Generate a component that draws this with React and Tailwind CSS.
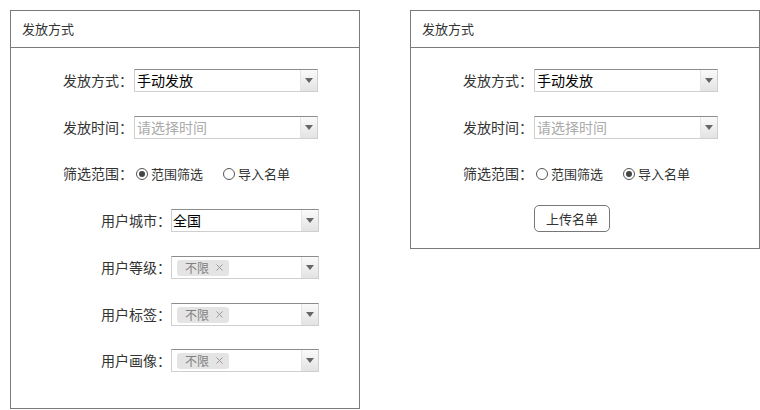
import React from "react";

const font = { fontFamily: '"Noto Sans CJK SC", "Noto Sans", sans-serif' };

function Arrow() {
  return (
    <div className="w-[17px] h-full flex items-center justify-center bg-gradient-to-b from-[#fafafa] to-[#e3e3e3] border-l border-[#e4e4e4]">
      <svg width="8" height="5" viewBox="0 0 8 5">
        <path d="M0 0H8L4 5Z" fill="#666" />
      </svg>
    </div>
  );
}

function Select({ wide, children }) {
  return (
    <div
      className={`flex h-[23px] bg-white border border-[#cfcfcf] border-t-[#8c8c8c] ${
        wide ? "w-[184px] ml-[1px]" : "w-[148px]"
      }`}
    >
      <div className="flex-1 flex items-center min-w-0">{children}</div>
      <Arrow />
    </div>
  );
}

function Tag() {
  return (
    <div className="ml-[5px] h-[16px] flex items-center gap-[7px] pl-[8px] pr-[6px] rounded-[3px] bg-[#e4e4e4] text-[12px] text-[#808080]">
      <span>不限</span>
      <svg width="7" height="7" viewBox="0 0 7 7">
        <path d="M0.5 0.5L6.5 6.5M6.5 0.5L0.5 6.5" stroke="#999" strokeWidth="1" />
      </svg>
    </div>
  );
}

function Radio({ checked, label }) {
  return (
    <div className="flex items-center">
      <div className="w-[12px] h-[12px] rounded-full border border-[#555] flex items-center justify-center">
        {checked && <div className="w-[6px] h-[6px] rounded-full bg-[#444]" />}
      </div>
      <span className="ml-[3px]">{label}</span>
    </div>
  );
}

function Row({ label, indent, className = "", children }) {
  return (
    <div className={`flex items-center h-[23px] ${indent ? "pl-[90px]" : "pl-[52px]"} ${className}`}>
      <span className="text-[14px] text-[#333] whitespace-nowrap">{label}</span>
      {children}
    </div>
  );
}

function TopRows({ cityRange }) {
  return (
    <div className="flex flex-col">
      <Row label="发放方式：">
        <Select wide>
          <span className="pl-[2px] text-[14px] text-black">手动发放</span>
        </Select>
      </Row>
      <Row label="发放时间：" className="mt-[24px]">
        <Select wide>
          <span className="pl-[2px] text-[14px] text-[#aaa]">请选择时间</span>
        </Select>
      </Row>
      <Row label="筛选范围：" className="mt-[23px]">
        <div className="ml-[3px] flex items-center gap-[20px] text-[13px] text-[#333]">
          <Radio checked={cityRange} label="范围筛选" />
          <Radio checked={!cityRange} label="导入名单" />
        </div>
      </Row>
    </div>
  );
}

function Header() {
  return (
    <div className="h-[37px] border-b border-[#7a7a7a] flex items-center pl-[11px] text-[13px] text-[#333]">
      发放方式
    </div>
  );
}

export default function App() {
  return (
    <div className="w-[760px] h-[410px] bg-white flex items-start gap-[50px] pt-[10px] pl-[10px]" style={font}>
      {/* 范围筛选 */}
      <div className="w-[350px] h-[399px] border border-[#7a7a7a]">
        <Header />
        <div className="pt-[21px] flex flex-col">
          <TopRows cityRange />
          <Row label="用户城市：" indent className="mt-[24px]">
            <Select>
              <span className="pl-[1px] text-[14px] text-black">全国</span>
            </Select>
          </Row>
          <Row label="用户等级：" indent className="mt-[24px]">
            <Select>
              <Tag />
            </Select>
          </Row>
          <Row label="用户标签：" indent className="mt-[24px]">
            <Select>
              <Tag />
            </Select>
          </Row>
          <Row label="用户画像：" indent className="mt-[23px]">
            <Select>
              <Tag />
            </Select>
          </Row>
        </div>
      </div>

      {/* 导入名单 */}
      <div className="w-[350px] h-[239px] border border-[#7a7a7a]">
        <Header />
        <div className="pt-[21px]">
          <TopRows cityRange={false} />
          <div className="mt-[20px] pl-[123px]">
            <button className="w-[76px] h-[27px] rounded-[5px] border border-[#777] bg-white text-[13px] text-[#333]">
              上传名单
            </button>
          </div>
        </div>
      </div>
    </div>
  );
}
